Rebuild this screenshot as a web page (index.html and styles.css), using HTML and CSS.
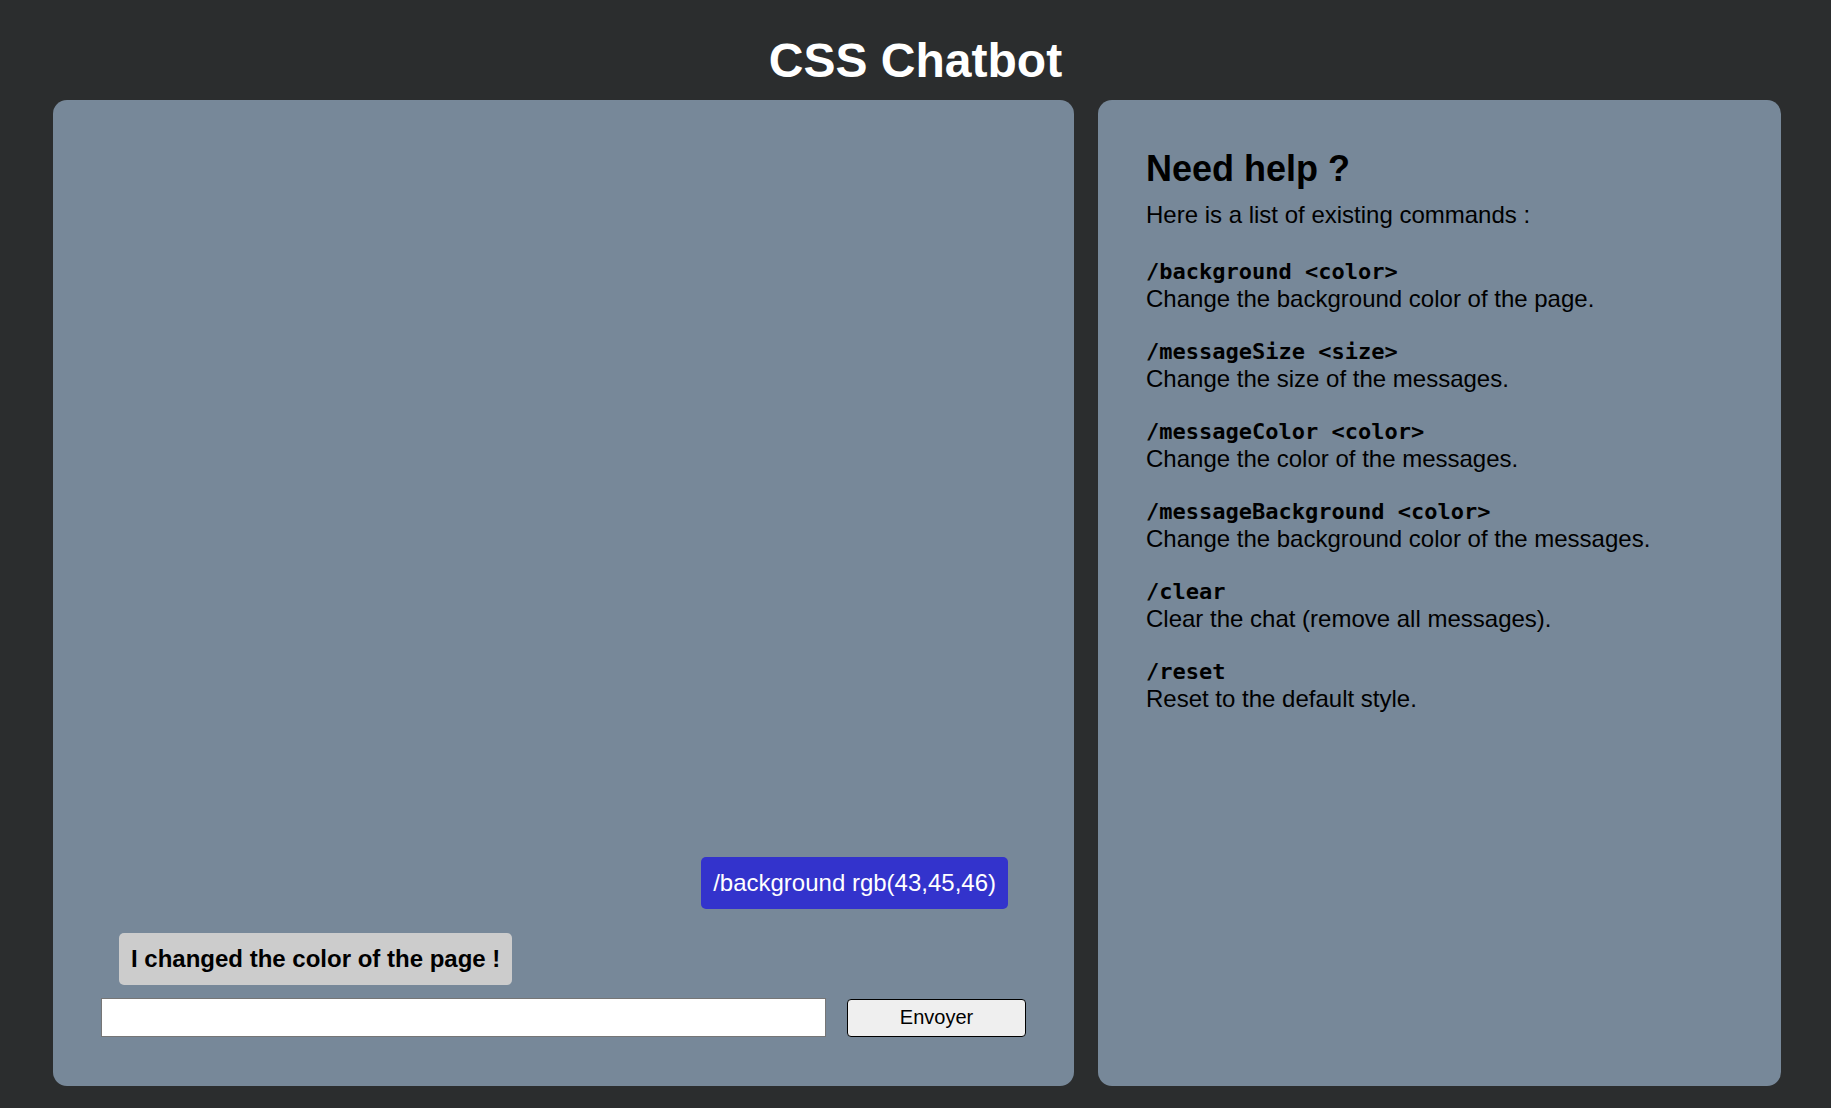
FILE: index.html
```html
<!DOCTYPE html>
<html lang="en">
<head>
<meta charset="utf-8">
<title>CSS Chatbot</title>
<link rel="stylesheet" href="styles.css">
</head>
<body>
<h1 class="title">CSS Chatbot</h1>
<main class="layout">
  <section class="panel chat">
    <div class="messages">
      <div class="message sent">/background rgb(43,45,46)</div>
      <div class="message received">I changed the color of the page !</div>
    </div>
    <form class="composer">
      <input class="composer-input" type="text">
      <button class="composer-button" type="button">Envoyer</button>
    </form>
  </section>
  <section class="panel help">
    <h2 class="help-title">Need help ?</h2>
    <p class="help-intro">Here is a list of existing commands :</p>
    <p class="cmd"><code class="cmd-name">/background &lt;color&gt;</code><span class="cmd-desc">Change the background color of the page.</span></p>
    <p class="cmd"><code class="cmd-name">/messageSize &lt;size&gt;</code><span class="cmd-desc">Change the size of the messages.</span></p>
    <p class="cmd"><code class="cmd-name">/messageColor &lt;color&gt;</code><span class="cmd-desc">Change the color of the messages.</span></p>
    <p class="cmd"><code class="cmd-name">/messageBackground &lt;color&gt;</code><span class="cmd-desc">Change the background color of the messages.</span></p>
    <p class="cmd"><code class="cmd-name">/clear</code><span class="cmd-desc">Clear the chat (remove all messages).</span></p>
    <p class="cmd"><code class="cmd-name">/reset</code><span class="cmd-desc">Reset to the default style.</span></p>
  </section>
</main>
</body>
</html>
```
FILE: styles.css
```css
html, body {
  margin: 0;
  padding: 0;
}
body {
  background: rgb(43, 45, 46);
  font-family: "Liberation Sans", Arial, sans-serif;
  font-size: 24px;
  color: #000;
}
.title {
  margin: 33px 0 12px;
  text-align: center;
  color: #fff;
  font-size: 48px;
  font-weight: bold;
}
.layout {
  display: grid;
  grid-template-columns: 1021fr 683fr;
  gap: 24px;
  padding: 0 50px 0 53px;
  height: 986px;
}
.panel {
  background: #778899;
  border-radius: 14px;
  box-sizing: border-box;
  padding: 48px;
  min-width: 0;
}
.chat {
  display: flex;
  flex-direction: column;
  padding-bottom: 49px;
}
.messages {
  flex: 1;
  display: flex;
  flex-direction: column;
  justify-content: flex-end;
  gap: 24px;
  padding: 0 18px;
  margin-bottom: 13px;
}
.message {
  padding: 12px;
  border-radius: 5px;
  line-height: normal;
}
.sent {
  align-self: flex-end;
  background: #3333cc;
  color: #fff;
}
.received {
  align-self: flex-start;
  background: #cccccc;
  color: #000;
  font-weight: bold;
}
.composer {
  display: flex;
  gap: 21px;
  align-items: center;
  margin: 0;
}
.composer-input {
  flex: 1 1 auto;
  min-width: 0;
  height: 39px;
  box-sizing: border-box;
  border: 1px solid #767676;
  background: #fff;
  font-family: "Liberation Sans", Arial, sans-serif;
  font-size: 20px;
  padding: 2px 6px;
  margin: 0;
}
.composer-button {
  flex: 0 0 179px;
  height: 38px;
  box-sizing: border-box;
  border: 1px solid #000;
  border-radius: 4px;
  background: #efefef;
  color: #000;
  font-family: "Liberation Sans", Arial, sans-serif;
  font-size: 20px;
  padding: 0 6px;
  margin: 0;
}
.help-title {
  margin: 0 0 11px;
  font-size: 36px;
  font-weight: bold;
}
.help-intro {
  margin: 0 0 29px;
}
.cmd {
  margin: 0 0 25px;
}
.cmd-name {
  display: block;
  font-family: "DejaVu Sans Mono", "Liberation Mono", monospace;
  font-weight: bold;
  font-size: 22px;
  line-height: 27px;
}
.cmd-desc {
  display: block;
  line-height: 28px;
}
```
